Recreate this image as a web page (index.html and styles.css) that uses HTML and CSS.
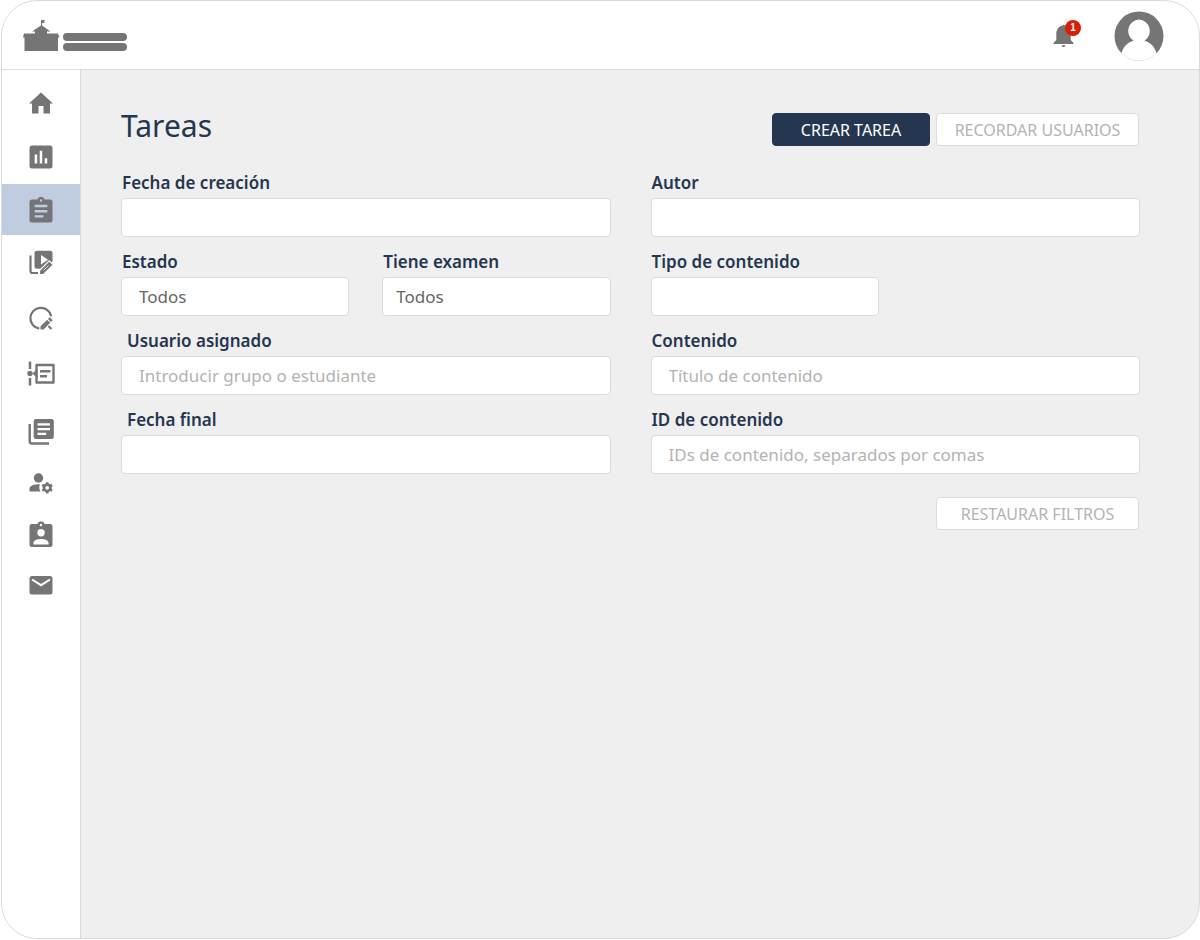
FILE: index.html
```html
<!DOCTYPE html>
<html lang="es">
<head>
<meta charset="utf-8">
<meta name="viewport" content="width=device-width, initial-scale=1">
<title>Tareas</title>
<link rel="stylesheet" href="styles.css">
</head>
<body>
<div class="app">
  <header class="topbar">
    <a class="brand" href="#" aria-label="Inicio">
      <svg width="105" height="34" viewBox="0 0 105 34" fill="currentColor">
        <path d="M18 1h4l-1 1.500.5 1.500h-2.500v2.500l8.500 6h-3.500v2h11l1.500 4h-1.500V32H1.500V18.500H0l1-4h11v-2H9l9-6z"/>
        <rect x="40" y="14" width="64" height="8" rx="4"/>
        <rect x="40" y="24" width="64" height="8" rx="4"/>
      </svg>
    </a>
    <div class="account">
      <button class="bell" type="button" aria-label="Notificaciones">
        <svg width="32" height="28" viewBox="0 0 32 28" fill="currentColor">
          <path d="M11 3.500C6.500 4 4.300 8 4.300 12v6L1.500 21v1h20v-1l-2.800-3v-6c0-4-2-8-6.200-8.500V3h-1.500zM9.500 23.300h4c0 2.400-4 2.400-4 0z"/>
        </svg>
        <span class="badge">1</span>
      </button>
      <button class="avatar" type="button" aria-label="Perfil">
        <svg width="50" height="50" viewBox="0 0 50 50">
          <circle cx="25" cy="25" r="24.500" fill="#757575"/>
          <path d="M25 8.500a11 11.500 0 0 0-5.500 21.300C13.500 31.500 9 36 7.500 42.300a24.500 24.500 0 0 0 35 0C41 36 36.500 31.500 30.500 29.800A11 11.500 0 0 0 25 8.500z" fill="#fff"/>
        </svg>
      </button>
    </div>
  </header>
  <div class="body">
    <nav class="sidebar" aria-label="Principal">
      <div class="nav-group nav-group-main">
        <a class="nav-link" href="#" aria-label="Inicio"><svg class="icon" viewBox="0 0 28 28"><path d="M14 2.500 2 13.500h3V23.500h6.500v-7.500h5v7.500H23v-10h3z"/></svg></a>
        <a class="nav-link" href="#" aria-label="Informes"><svg class="icon" viewBox="0 0 28 28"><path fill-rule="evenodd" d="M5 2.500h18A2.500 2.500 0 0 1 25.500 5v18a2.500 2.500 0 0 1-2.500 2.500H5A2.500 2.500 0 0 1 2.500 23V5A2.500 2.500 0 0 1 5 2.500zM7.700 11.500v9h2.500v-9zm5-3.700v12.700h2.500V7.800zm5 7.500v5.200h2.500v-5.200z"/></svg></a>
        <a class="nav-link active" href="#" aria-label="Tareas" aria-current="page"><svg class="icon" viewBox="0 0 28 28"><path fill-rule="evenodd" d="M5 3.500h5.300a3.900 3.900 0 0 1 7.400 0H23A2.500 2.500 0 0 1 25.500 6v18a2.500 2.500 0 0 1-2.500 2.500H5A2.500 2.500 0 0 1 2.500 24V6A2.500 2.500 0 0 1 5 3.500zM14 3.300a1.200 1.200 0 1 0 0 2.400 1.200 1.200 0 0 0 0-2.400zM7.700 8.800v2.500h12.600V8.800zm0 5.200v2.400h12.600V14zm0 5.200v2.400h8.800v-2.400z"/></svg></a>
        <a class="nav-link" href="#" aria-label="Editar contenido"><svg class="icon" viewBox="0 0 28 28"><path d="M3.500 6.500V22a2 2 0 0 0 2 2H11" fill="none" stroke="currentColor" stroke-width="2.200"/><path d="M10 1.800h13a2.500 2.500 0 0 1 2.500 2.500v8L18 19.800H10a2.500 2.500 0 0 1-2.500-2.500v-13A2.500 2.500 0 0 1 10 1.800z"/><path d="M14 6v9.500l7-4.700z" fill="#fff"/><path d="M12.500 25.500v-4l9.700-9.700 4 4-9.700 9.700z" stroke="#fff" stroke-width="1.200"/><path d="m16.500 21.500 5-5" stroke="#fff" stroke-width=".8"/></svg></a>
      </div>
      <div class="nav-group nav-group-edit">
        <a class="nav-link" href="#" aria-label="Evaluaciones"><svg class="icon" viewBox="0 0 28 28"><path d="M12.300 23.700A10.500 10.500 0 1 1 24.200 11.200" fill="none" stroke="currentColor" stroke-width="2.200"/><path d="M13.500 24.500v-3.200l6.700-6.500 3 3-6.600 6.700zM21 14l1.700-1.700 3 3L24 17zM20.700 21.800l1.500-1.500 3 3-1.500 1.500z"/></svg></a>
        <a class="nav-link" href="#" aria-label="Cronología"><svg class="icon" viewBox="0 0 28 28"><path d="M3 1.500v7.500m0 9v7.500" stroke="currentColor" stroke-width="2.500"/><circle cx="3" cy="13.500" r="2.700"/><path d="M9.500 5h17v17.500h-17z" fill="none" stroke="currentColor" stroke-width="2.400" stroke-linejoin="round"/><path d="m10.500 8.500-5 5 5 5z"/><path d="M13 11.300h10.500M13 16.200h7" stroke="currentColor" stroke-width="2.400"/></svg></a>
      </div>
      <div class="nav-group nav-group-admin">
        <a class="nav-link" href="#" aria-label="Biblioteca"><svg class="icon" viewBox="0 0 28 28"><path d="M2.700 6v17.500a2 2 0 0 0 2 2H22" fill="none" stroke="currentColor" stroke-width="2.400"/><path fill-rule="evenodd" d="M9 1h15.500A2.300 2.300 0 0 1 26.800 3.300v15.500a2.300 2.300 0 0 1-2.300 2.300H9a2.300 2.300 0 0 1-2.300-2.300V3.300A2.300 2.300 0 0 1 9 1zm1.500 4.300v2.300H23V5.300zm0 4.700v2.300H23V10zm0 4.800v2.300h8.700v-2.300z"/></svg></a>
        <a class="nav-link" href="#" aria-label="Gestión de usuarios"><svg class="icon" viewBox="0 0 28 28"><circle cx="11.500" cy="9" r="4.700"/><path d="M2.500 22.500v-3c0-3 5.500-4.500 10.500-4.300a8 8 0 0 0 .5 7.300z"/><circle cx="20.200" cy="18.800" r="3.200" fill="none" stroke="currentColor" stroke-width="2.600"/><path d="M20.200 13.200v2m0 7.200v2M15.300 16l1.800 1m6.200 3.600 1.800 1M15.300 21.600l1.800-1m6.200-3.600 1.800-1" stroke="currentColor" stroke-width="2.600"/></svg></a>
        <a class="nav-link" href="#" aria-label="Perfiles"><svg class="icon" viewBox="0 0 28 28"><path fill-rule="evenodd" d="M5 4h5.300a3.900 3.900 0 0 1 7.400 0H23a2.500 2.500 0 0 1 2.500 2.500v18A2.500 2.500 0 0 1 23 27H5a2.500 2.500 0 0 1-2.500-2.500v-18A2.500 2.500 0 0 1 5 4zM14 3.800A1.200 1.200 0 1 0 14 6.200a1.200 1.200 0 0 0 0-2.400zM14 9a3.700 3.700 0 1 0 0 7.400A3.700 3.700 0 0 0 14 9zM6.500 24.500h15v-1.700c0-5.200-15-5.200-15 0z"/></svg></a>
        <a class="nav-link" href="#" aria-label="Mensajes"><svg class="icon" viewBox="0 0 28 28"><path d="M5 5h18a2.500 2.500 0 0 1 2.500 2.500v13.500a2.500 2.500 0 0 1-2.500 2.500H5A2.500 2.500 0 0 1 2.500 21V7.500A2.500 2.500 0 0 1 5 5z"/><path d="m5 8.500 9 5.700 9-5.700" fill="none" stroke="#fff" stroke-width="2"/></svg></a>
      </div>
    </nav>
    <main class="content">
      <div class="heading">
        <h1>Tareas</h1>
        <div class="actions">
          <button class="button button-primary" type="button">CREAR TAREA</button>
          <button class="button button-wide" type="button">RECORDAR USUARIOS</button>
        </div>
      </div>
      <form class="filters">
        <div class="field">
          <label for="created">Fecha de creación</label>
          <input id="created" type="text">
        </div>
        <div class="field">
          <label for="author">Autor</label>
          <input id="author" type="text">
        </div>
        <div class="pair">
          <div class="field">
            <label for="status">Estado</label>
            <select id="status"><option>Todos</option></select>
          </div>
          <div class="field">
            <label for="exam">Tiene examen</label>
            <select id="exam" class="compact"><option>Todos</option></select>
          </div>
        </div>
        <div class="pair">
          <div class="field">
            <label for="type">Tipo de contenido</label>
            <select id="type"><option></option></select>
          </div>
        </div>
        <div class="field">
          <label class="inset" for="assignee">Usuario asignado</label>
          <input id="assignee" type="text" placeholder="Introducir grupo o estudiante">
        </div>
        <div class="field">
          <label for="title">Contenido</label>
          <input id="title" type="text" placeholder="Título de contenido">
        </div>
        <div class="field">
          <label class="inset" for="due">Fecha final</label>
          <input id="due" type="text">
        </div>
        <div class="field">
          <label for="ids">ID de contenido</label>
          <input id="ids" type="text" placeholder="IDs de contenido, separados por comas">
        </div>
        <div class="reset">
          <button class="button button-wide" type="reset">RESTAURAR FILTROS</button>
        </div>
      </form>
    </main>
  </div>
</div>
</body>
</html>
```
FILE: styles.css
```css
* {
  box-sizing: border-box;
}

body {
  margin: 0;
  padding: 0 0 1px 1px;
  background: #fff;
  color: #253650;
  font-family: "Noto Sans", "Open Sans", sans-serif;
  font-size: 16px;
}

.app {
  display: flex;
  flex-direction: column;
  min-height: calc(100vh - 1px);
  overflow: hidden;
  border: 1px solid #d9d9d9;
  border-radius: 36px;
  background: #efefef;
}

.topbar {
  display: flex;
  align-items: center;
  justify-content: space-between;
  height: 69px;
  padding: 2px 35px 0 21px;
  border-bottom: 1px solid #dcdcdc;
  background: #fff;
}

.brand,
.account {
  display: flex;
  align-items: center;
  color: #757575;
}

.account {
  gap: 30px;
}

.bell,
.avatar {
  display: flex;
  padding: 0;
  border: 0;
  background: none;
  color: inherit;
}

.bell {
  position: relative;
}

.badge {
  position: absolute;
  top: -2px;
  right: 3px;
  width: 16px;
  height: 16px;
  border-radius: 50%;
  background: #d81e05;
  color: #fff;
  font-size: 10px;
  font-weight: 600;
  line-height: 16px;
  text-align: center;
}

.body {
  display: flex;
  flex: 1;
}

.sidebar {
  flex: none;
  width: 79px;
  padding-top: 8px;
  border-right: 1px solid #dcdcdc;
  background: #fff;
}

.nav-group {
  display: flex;
  flex-direction: column;
}

.nav-group-main {
  gap: 2px;
}

.nav-group-edit {
  gap: 4px;
  padding: 5px 0 7px;
}

.nav-link {
  display: flex;
  align-items: center;
  justify-content: center;
  height: 51px;
  color: #757575;
}

.nav-link.active {
  background: #c0cce0;
}

.icon {
  width: 28px;
  height: 28px;
  fill: currentColor;
}

.content {
  flex: 1;
  padding: 35px 59px 40px 40px;
}

.heading {
  display: flex;
  align-items: flex-start;
  justify-content: space-between;
  height: 66px;
}

h1 {
  margin: 0;
  font-size: 30px;
  font-weight: 400;
  line-height: 42px;
}

.actions {
  display: flex;
  gap: 6px;
  padding: 8px 1px 0 0;
}

.button {
  height: 33px;
  padding: 0;
  border: 1px solid #dadada;
  border-radius: 4px;
  background: #fff;
  color: #b3b3b3;
  font: inherit;
}

.button-primary {
  width: 158px;
  border-color: #253650;
  background: #253650;
  color: #fff;
}

.button-wide {
  width: 203px;
}

.filters {
  display: grid;
  grid-template-columns: 1fr 1fr;
  gap: 13px 40px;
}

.pair {
  display: grid;
  grid-template-columns: 1fr 1fr;
  gap: 33px;
}

.field {
  display: flex;
  flex-direction: column;
  gap: 3px;
}

label {
  padding-left: 1px;
  font-size: 17px;
  font-weight: 600;
  line-height: 24px;
}

.inset {
  padding-left: 6px;
}

input,
select {
  width: 100%;
  height: 39px;
  padding: 0 17px;
  border: 1px solid #dadada;
  border-radius: 4px;
  background: #fff;
  color: #666;
  font: inherit;
  font-size: 17px;
  appearance: none;
}

.compact {
  padding: 0 13px;
}

input::placeholder {
  color: #b3b3b3;
  opacity: 1;
}

.reset {
  grid-column: 1 / -1;
  padding: 10px 1px 0 0;
  text-align: right;
}
```
